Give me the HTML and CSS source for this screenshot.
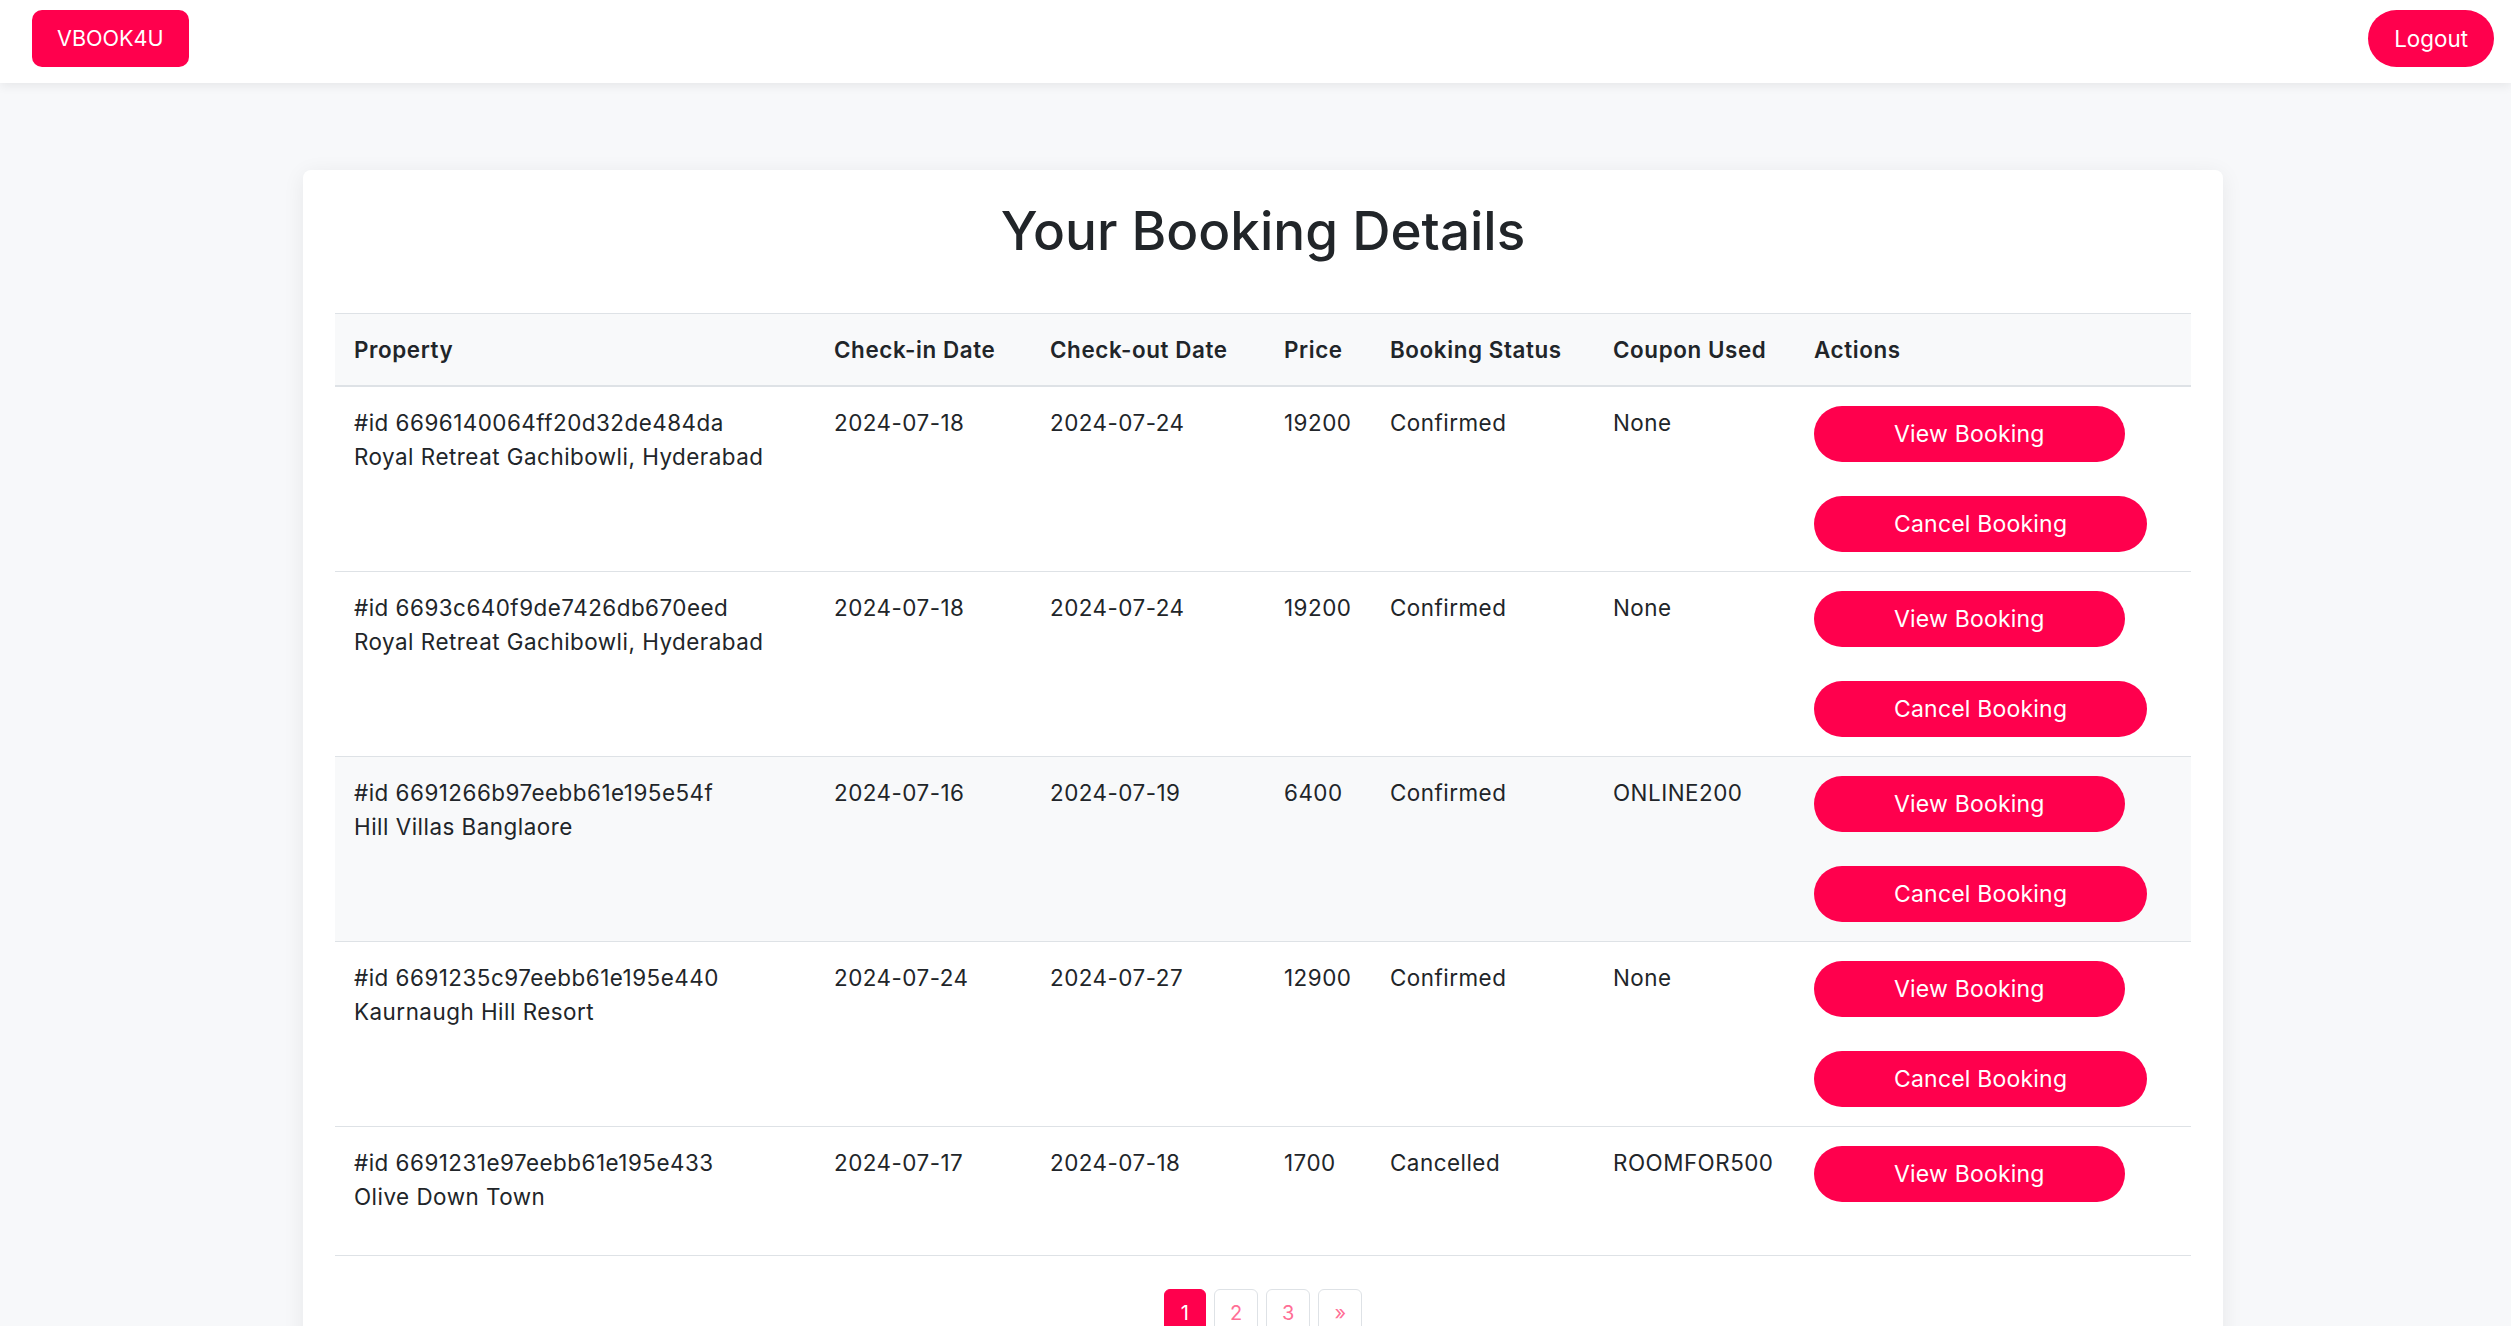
FILE: index.html
```html
<!DOCTYPE html>
<html lang="en">
<head>
<meta charset="utf-8">
<title>VBOOK4U - Your Booking Details</title>
<link rel="stylesheet" href="styles.css">
</head>
<body>
<nav class="topbar">
  <a class="brand-btn" href="#">VBOOK4U</a>
  <button class="logout-btn" type="button">Logout</button>
</nav>
<main class="page">
  <section class="card">
    <h2 class="card-title">Your Booking Details</h2>
    <table class="bookings">
      <colgroup>
        <col class="c-prop"><col class="c-in"><col class="c-out"><col class="c-price"><col class="c-status"><col class="c-coupon"><col class="c-actions">
      </colgroup>
      <thead>
        <tr>
          <th>Property</th><th>Check-in Date</th><th>Check-out Date</th><th>Price</th><th>Booking Status</th><th>Coupon Used</th><th>Actions</th>
        </tr>
      </thead>
      <tbody>
        <tr>
          <td>#id 6696140064ff20d32de484da<br>Royal Retreat Gachibowli, Hyderabad</td>
          <td>2024-07-18</td><td>2024-07-24</td><td>19200</td><td>Confirmed</td><td>None</td>
          <td><button class="pill-btn view">View Booking</button><button class="pill-btn">Cancel Booking</button></td>
        </tr>
        <tr>
          <td>#id 6693c640f9de7426db670eed<br>Royal Retreat Gachibowli, Hyderabad</td>
          <td>2024-07-18</td><td>2024-07-24</td><td>19200</td><td>Confirmed</td><td>None</td>
          <td><button class="pill-btn view">View Booking</button><button class="pill-btn">Cancel Booking</button></td>
        </tr>
        <tr class="row-hover">
          <td>#id 6691266b97eebb61e195e54f<br>Hill Villas Banglaore</td>
          <td>2024-07-16</td><td>2024-07-19</td><td>6400</td><td>Confirmed</td><td>ONLINE200</td>
          <td><button class="pill-btn view">View Booking</button><button class="pill-btn">Cancel Booking</button></td>
        </tr>
        <tr>
          <td>#id 6691235c97eebb61e195e440<br>Kaurnaugh Hill Resort</td>
          <td>2024-07-24</td><td>2024-07-27</td><td>12900</td><td>Confirmed</td><td>None</td>
          <td><button class="pill-btn view">View Booking</button><button class="pill-btn">Cancel Booking</button></td>
        </tr>
        <tr>
          <td>#id 6691231e97eebb61e195e433<br>Olive Down Town</td>
          <td>2024-07-17</td><td>2024-07-18</td><td>1700</td><td>Cancelled</td><td>ROOMFOR500</td>
          <td><button class="pill-btn view">View Booking</button></td>
        </tr>
      </tbody>
    </table>
    <nav class="pager">
      <a class="page-item active" href="#">1</a>
      <a class="page-item" href="#">2</a>
      <a class="page-item" href="#">3</a>
      <a class="page-item" href="#">»</a>
    </nav>
  </section>
</main>
</body>
</html>
```
FILE: styles.css
```css
* { box-sizing: border-box; }

body {
  margin: 0;
  background: #f7f8fa;
  font-family: Inter, "Noto Sans", "DejaVu Sans", sans-serif;
  font-size: 22.4px;
  line-height: 1.5;
  color: #212529;
}

.topbar {
  position: relative;
  z-index: 1;
  height: 83px;
  background: #fff;
  box-shadow: 0 3px 10px rgba(0, 0, 0, 0.07);
  display: flex;
  justify-content: space-between;
  align-items: flex-start;
  padding: 10px 17px 0 32px;
}

.brand-btn,
.logout-btn {
  height: 57px;
  display: flex;
  align-items: center;
  padding: 0 26px;
  background: #ff004d;
  color: #fff;
  font-family: inherit;
  font-size: 22.4px;
  text-decoration: none;
  border: 0;
}

.brand-btn { border-radius: 10px; font-size: 21.6px; padding: 0 25px; }
.logout-btn { border-radius: 29px; }

.page {
  display: flex;
  justify-content: center;
  padding: 87px 0 0 15px;
}

.card {
  width: 1920px;
  background: #fff;
  border-radius: 8px;
  box-shadow: 0 4px 22px rgba(0, 0, 0, 0.07);
  padding: 30px 32px 40px;
}

.card-title {
  margin: 0 0 49px;
  text-align: center;
  font-size: 53px;
  font-weight: 500;
  line-height: 1.2;
}

.bookings {
  width: 100%;
  table-layout: fixed;
  border-collapse: collapse;
}

.c-prop { width: 480px; }
.c-in { width: 216px; }
.c-out { width: 234px; }
.c-price { width: 106px; }
.c-status { width: 223px; }
.c-coupon { width: 201px; }
.c-actions { width: 396px; }

.bookings thead tr {
  background: #f8f9fa;
  border-top: 1px solid #dee2e6;
}

.bookings th {
  text-align: left;
  font-weight: 600;
  padding: 19px;
  border-bottom: 2px solid #dee2e6;
  white-space: nowrap;
  letter-spacing: 0.6px;
}

.bookings td {
  padding: 19px;
  vertical-align: top;
  border-bottom: 1px solid #dee2e6;
  white-space: nowrap;
  letter-spacing: 0.5px;
}

.bookings tr.row-hover { background: #f8f9fa; }

.pill-btn {
  display: block;
  height: 56px;
  padding: 0 80px;
  border: 0;
  border-radius: 28px;
  background: #ff004d;
  color: #fff;
  font-family: inherit;
  font-size: 23px;
  letter-spacing: 0.2px;
  white-space: nowrap;
}

.pill-btn.view { margin-bottom: 34px; }

.pager {
  display: flex;
  justify-content: center;
  gap: 8px;
  margin-top: 33px;
}

.page-item {
  min-width: 42px;
  height: 48px;
  padding: 0 15px;
  display: flex;
  align-items: center;
  justify-content: center;
  border: 1px solid #dee2e6;
  border-radius: 6px;
  color: #ff6f96;
  font-size: 20px;
  text-decoration: none;
}

.page-item.active {
  background: #ff004d;
  border-color: #ff004d;
  color: #fff;
  padding: 0 13px;
}
```
